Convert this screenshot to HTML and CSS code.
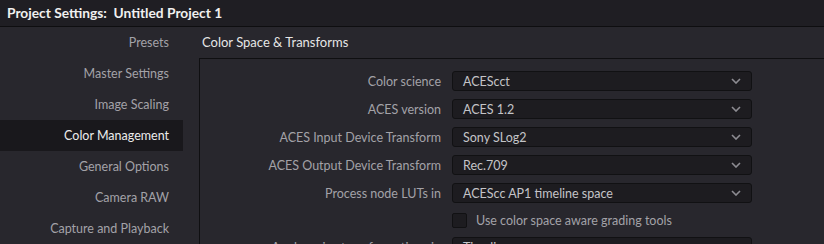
FILE: index.html
```html
<!DOCTYPE html>
<html lang="en">
<head>
    <meta charset="UTF-8">
    <title>Project Settings</title>
    <link rel="stylesheet" href="styles.css">
</head>
<body>
    <div class="titlebar">Project Settings:&nbsp; Untitled Project 1</div>
    <div class="main">
        <div class="sidebar">
            <div class="item">Presets</div>
            <div class="item">Master Settings</div>
            <div class="item">Image Scaling</div>
            <div class="item active">Color Management</div>
            <div class="item">General Options</div>
            <div class="item">Camera RAW</div>
            <div class="item">Capture and Playback</div>
        </div>
        <div class="content">
            <div class="section-title">Color Space &amp; Transforms</div>
            <div class="panel">
                <div class="row">
                    <label>Color science</label>
                    <div class="dropdown"><span>ACEScct</span><svg width="10" height="6" viewBox="0 0 10 6"><path d="M1 1 L5 5 L9 1" /></svg></div>
                </div>
                <div class="row">
                    <label>ACES version</label>
                    <div class="dropdown"><span>ACES 1.2</span><svg width="10" height="6" viewBox="0 0 10 6"><path d="M1 1 L5 5 L9 1" /></svg></div>
                </div>
                <div class="row">
                    <label>ACES Input Device Transform</label>
                    <div class="dropdown"><span>Sony SLog2</span><svg width="10" height="6" viewBox="0 0 10 6"><path d="M1 1 L5 5 L9 1" /></svg></div>
                </div>
                <div class="row">
                    <label>ACES Output Device Transform</label>
                    <div class="dropdown"><span>Rec.709</span><svg width="10" height="6" viewBox="0 0 10 6"><path d="M1 1 L5 5 L9 1" /></svg></div>
                </div>
                <div class="row">
                    <label>Process node LUTs in</label>
                    <div class="dropdown"><span>ACEScc AP1 timeline space</span><svg width="10" height="6" viewBox="0 0 10 6"><path d="M1 1 L5 5 L9 1" /></svg></div>
                </div>
                <div class="row check-row">
                    <label></label>
                    <div class="check"><span class="box"></span><span>Use color space aware grading tools</span></div>
                </div>
                <div class="row">
                    <label>Apply resize transformations in</label>
                    <div class="dropdown"><span>Timeline</span><svg width="10" height="6" viewBox="0 0 10 6"><path d="M1 1 L5 5 L9 1" /></svg></div>
                </div>
            </div>
        </div>
    </div>
</body>
</html>
```

FILE: styles.css
```css
body {
    margin: 0;
    background-color: #28272d;
    font-family: Lato, "Open Sans", sans-serif;
    font-size: 12.5px;
    color: #a3a2a8;
    overflow: hidden;
}
.titlebar {
    height: 26px;
    line-height: 26px;
    padding-left: 7px;
    background-color: #1f1e23;
    border-bottom: 1px solid #0e0e10;
    color: #f0f0f0;
    font-weight: bold;
    font-size: 13.75px;
}
.main {
    display: flex;
}
.sidebar {
    width: 183px;
    margin-right: 16px;
}
.item {
    height: 31px;
    line-height: 31px;
    text-align: right;
    padding-right: 14px;
}
.item.active {
    background-color: #19181c;
    color: #ececec;
}
.content {
    flex: 1;
}
.section-title {
    height: 31px;
    line-height: 31px;
    padding-left: 3px;
    color: #e6e6e6;
    font-size: 13px;
}
.panel {
    border-top: 1px solid #0f0f11;
    border-left: 1px solid #0f0f11;
    padding-top: 12px;
    display: flex;
    flex-direction: column;
    gap: 8px;
}
.row {
    display: grid;
    grid-template-columns: 241px 300px;
    column-gap: 11px;
    align-items: center;
    height: 20px;
}
.row label {
    text-align: right;
}
.check-row {
    height: 18px;
}
.dropdown {
    height: 18px;
    border: 1px solid #111113;
    border-radius: 3px;
    background-color: #1d1c20;
    color: #c4c4c8;
    display: flex;
    align-items: center;
    justify-content: space-between;
    padding: 0 10px;
}
.dropdown svg path {
    fill: none;
    stroke: #8d8c92;
    stroke-width: 1.6;
}
.check {
    display: flex;
    align-items: center;
    gap: 9px;
}
.box {
    width: 13px;
    height: 13px;
    border: 1px solid #111113;
    border-radius: 2px;
    background-color: #1d1c20;
}
```
